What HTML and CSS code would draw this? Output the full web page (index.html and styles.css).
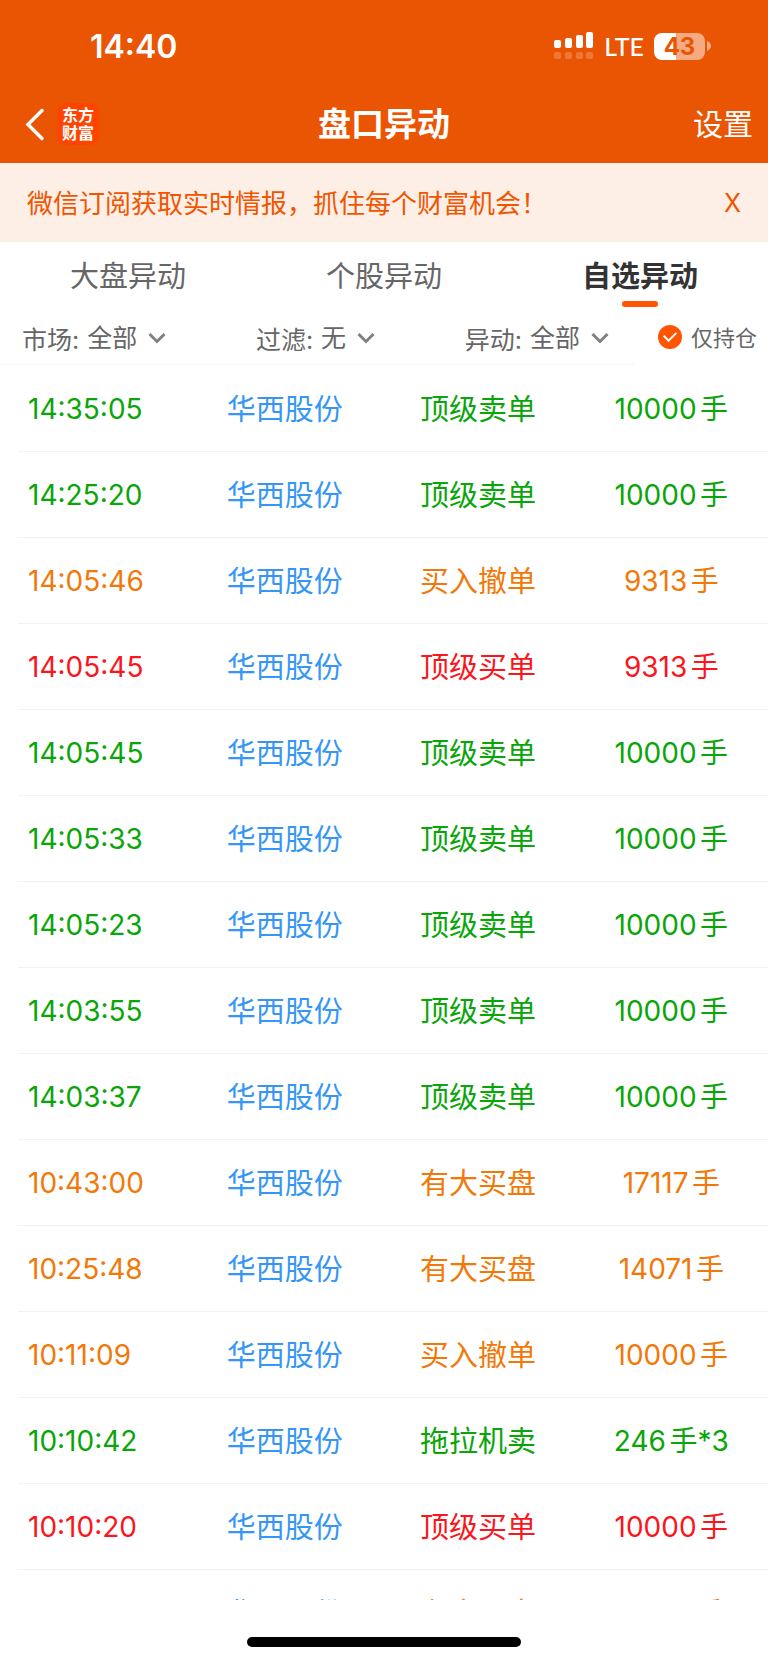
FILE: index.html
```html
<!DOCTYPE html>
<html lang="zh-CN">
<head>
    <meta charset="UTF-8">
    <meta name="viewport" content="width=device-width, initial-scale=1.0">
    <title>盘口异动</title>
    <link rel="stylesheet" href="styles.css">
</head>
<body>
    <header class="header">
        <div class="status-bar">
            <span class="clock">14:40</span>
            <div class="status-icons">
                <svg class="signal" width="40" height="28" viewBox="0 0 40 28" fill="#fff" aria-hidden="true">
                    <rect x="0" y="8" width="7" height="8" rx="2"/>
                    <rect x="11" y="6" width="7" height="10" rx="2"/>
                    <rect x="22" y="3" width="7" height="13" rx="2"/>
                    <rect x="32" y="0" width="7" height="16" rx="2"/>
                    <g opacity="0.2">
                        <rect x="0" y="20" width="7" height="7" rx="2"/>
                        <rect x="11" y="20" width="7" height="7" rx="2"/>
                        <rect x="22" y="20" width="7" height="7" rx="2"/>
                        <rect x="32" y="20" width="7" height="7" rx="2"/>
                    </g>
                </svg>
                <span class="network">LTE</span>
                <div class="battery">
                    <span class="battery-level">43</span>
                    <svg width="4" height="10" viewBox="0 0 4 10" aria-hidden="true"><path d="M0 0C2 1 4 2.500 4 5S2 9 0 10Z" fill="#fff" opacity="0.5"/></svg>
                </div>
            </div>
        </div>
        <nav class="nav-bar">
            <div class="nav-left">
                <a href="#" class="back" aria-label="返回">
                    <svg width="20" height="34" viewBox="0 0 20 34"><path d="M17 3.500L3 17.500L17 31.500" fill="none" stroke="#fff" stroke-width="3.500" stroke-linecap="round" stroke-linejoin="miter"/></svg>
                </a>
                <a href="#" class="logo">东方<br>财富</a>
            </div>
            <h1 class="title">盘口异动</h1>
            <a href="#" class="settings">设置</a>
        </nav>
    </header>

    <div class="notice">
        <a href="#" class="notice-text">微信订阅获取实时情报，抓住每个财富机会！</a>
        <button type="button" class="notice-close" aria-label="关闭">X</button>
    </div>

    <nav class="tabs">
        <a href="#" class="tab">大盘异动</a>
        <a href="#" class="tab">个股异动</a>
        <a href="#" class="tab active">自选异动</a>
    </nav>

    <form class="filters">
        <div class="filter-list">
            <div class="filter">
                <label for="market">市场:</label>
                <select id="market"><option>全部</option></select>
                <svg class="arrow" width="18" height="12" viewBox="0 0 18 12"><path d="M1.500 2L9 9.500L16.500 2" fill="none" stroke="#808080" stroke-width="3"/></svg>
            </div>
            <div class="filter">
                <label for="exclude">过滤:</label>
                <select id="exclude"><option>无</option></select>
                <svg class="arrow" width="18" height="12" viewBox="0 0 18 12"><path d="M1.500 2L9 9.500L16.500 2" fill="none" stroke="#808080" stroke-width="3"/></svg>
            </div>
            <div class="filter">
                <label for="change">异动:</label>
                <select id="change"><option>全部</option></select>
                <svg class="arrow" width="18" height="12" viewBox="0 0 18 12"><path d="M1.500 2L9 9.500L16.500 2" fill="none" stroke="#808080" stroke-width="3"/></svg>
            </div>
        </div>
        <div class="holding">
            <input type="checkbox" id="holding" checked>
            <label for="holding">仅持仓</label>
        </div>
    </form>

    <main class="list">
        <table class="records">
            <tbody>
                <tr class="sell"><td class="time">14:35:05</td><td class="stock">华西股份</td><td>顶级卖单</td><td class="amount">10000手</td></tr>
                <tr class="sell"><td class="time">14:25:20</td><td class="stock">华西股份</td><td>顶级卖单</td><td class="amount">10000手</td></tr>
                <tr class="notable"><td class="time">14:05:46</td><td class="stock">华西股份</td><td>买入撤单</td><td class="amount">9313手</td></tr>
                <tr class="buy"><td class="time">14:05:45</td><td class="stock">华西股份</td><td>顶级买单</td><td class="amount">9313手</td></tr>
                <tr class="sell"><td class="time">14:05:45</td><td class="stock">华西股份</td><td>顶级卖单</td><td class="amount">10000手</td></tr>
                <tr class="sell"><td class="time">14:05:33</td><td class="stock">华西股份</td><td>顶级卖单</td><td class="amount">10000手</td></tr>
                <tr class="sell"><td class="time">14:05:23</td><td class="stock">华西股份</td><td>顶级卖单</td><td class="amount">10000手</td></tr>
                <tr class="sell"><td class="time">14:03:55</td><td class="stock">华西股份</td><td>顶级卖单</td><td class="amount">10000手</td></tr>
                <tr class="sell"><td class="time">14:03:37</td><td class="stock">华西股份</td><td>顶级卖单</td><td class="amount">10000手</td></tr>
                <tr class="notable"><td class="time">10:43:00</td><td class="stock">华西股份</td><td>有大买盘</td><td class="amount">17117手</td></tr>
                <tr class="notable"><td class="time">10:25:48</td><td class="stock">华西股份</td><td>有大买盘</td><td class="amount">14071手</td></tr>
                <tr class="notable"><td class="time">10:11:09</td><td class="stock">华西股份</td><td>买入撤单</td><td class="amount">10000手</td></tr>
                <tr class="sell"><td class="time">10:10:42</td><td class="stock">华西股份</td><td>拖拉机卖</td><td class="amount">246手*3</td></tr>
                <tr class="buy"><td class="time">10:10:20</td><td class="stock">华西股份</td><td>顶级买单</td><td class="amount">10000手</td></tr>
                <tr class="notable"><td class="time">10:10:11</td><td class="stock">华西股份</td><td>有大买盘</td><td class="amount">14071手</td></tr>
            </tbody>
        </table>
    </main>

    <footer class="footer">
        <div class="home-bar"></div>
    </footer>
</body>
</html>
```
FILE: styles.css
```css
* {
    box-sizing: border-box;
}

body {
    display: flex;
    flex-direction: column;
    height: 100vh;
    margin: 0;
    background-color: #fff;
    color: #666;
    font-family: Inter, "Noto Sans CJK SC", sans-serif;
}

a {
    color: inherit;
    text-decoration: none;
}

.header {
    background-color: #ea5504;
    color: #fff;
}

/* status bar */
.status-bar {
    display: flex;
    justify-content: space-between;
    align-items: center;
    height: 86px;
    padding: 6px 57px 0 90px;
}

.clock {
    font-size: 32px;
    font-weight: 600;
}

.status-icons {
    display: flex;
    align-items: center;
    gap: 10px;
}

.network {
    font-family: Lato, sans-serif;
    font-size: 25px;
    font-weight: 500;
    line-height: 28px;
}

.battery {
    display: flex;
    align-items: center;
    gap: 2px;
}

.battery-level {
    width: 51px;
    height: 27px;
    border-radius: 8px;
    background: linear-gradient(to right, #fff 43%, #f5aa82 43%);
    color: #ea5504;
    font-size: 24px;
    font-weight: 700;
    line-height: 27px;
    text-align: center;
}

/* title bar */
.nav-bar {
    display: grid;
    grid-template-columns: 1fr auto 1fr;
    align-items: center;
    height: 77px;
    padding: 0 15px 2px;
}

.nav-left {
    display: flex;
    align-items: center;
    gap: 12px;
    padding-left: 10px;
}

.back,
.back svg,
.arrow {
    display: block;
}

.logo {
    width: 42px;
    height: 42px;
    padding-top: 3px;
    border-radius: 9px;
    background-color: #ff4400;
    font-size: 16px;
    font-weight: 700;
    line-height: 18px;
    text-align: center;
}

.title,
.settings {
    margin: 0;
    padding-bottom: 4px;
}

.title {
    font-size: 33px;
    font-weight: 700;
}

.settings {
    font-size: 30px;
    text-align: right;
}

/* notice */
.notice {
    display: flex;
    justify-content: space-between;
    align-items: center;
    height: 79px;
    padding: 0 27px 2px;
    background-color: #fdeee6;
    color: #f05500;
    font-size: 26px;
}

.notice-close {
    padding: 2px 0 0;
    border: 0;
    background: none;
    color: inherit;
    font-family: inherit;
    font-size: 25px;
}

/* tabs */
.tabs {
    display: flex;
    height: 70px;
}

.tab {
    position: relative;
    flex: 1;
    font-size: 29px;
    line-height: 70px;
    text-align: center;
}

.tab.active {
    color: #333;
    font-weight: 700;
}

.tab.active::after {
    content: "";
    position: absolute;
    bottom: 5px;
    left: 50%;
    width: 36px;
    height: 6px;
    margin-left: -18px;
    border-radius: 3px;
    background-color: #ff5500;
}

/* filters */
.filters {
    display: flex;
    height: 53px;
}

.filter-list {
    flex: 1;
    display: flex;
    justify-content: space-between;
    padding: 0 25px 0 22px;
    border-bottom: 1px solid #f5f5f5;
    font-size: 25px;
}

.filter {
    display: flex;
    align-items: center;
}

.filter select {
    appearance: none;
    margin: 0 10px 0 8px;
    padding: 0;
    border: 0;
    background: none;
    color: inherit;
    font: inherit;
}

.holding {
    display: flex;
    align-items: center;
    gap: 9px;
    padding: 0 11px 4px 24px;
    font-size: 22px;
}

.holding label {
    padding-bottom: 2px;
}

.holding input {
    appearance: none;
    display: grid;
    place-items: center;
    width: 24px;
    height: 24px;
    margin: 0;
    border-radius: 50%;
    background-color: #ff5500;
}

.holding input:checked::after {
    content: "";
    width: 10px;
    height: 6px;
    margin-bottom: 3px;
    border-bottom: 2px solid #fff;
    border-left: 2px solid #fff;
    transform: rotate(-45deg);
}

/* list */
.list {
    flex: 1;
    min-height: 0;
    padding-left: 18px;
    overflow: hidden;
}

.records {
    width: 100%;
    border-collapse: collapse;
    table-layout: fixed;
    font-size: 29px;
}

.records td {
    height: 86px;
    padding: 0 0 2px;
    border-bottom: 1px solid #f3f3f3;
    text-align: center;
    white-space: nowrap;
}

.records .time {
    width: 170px;
    padding: 2px 0 0 10px;
    font-size: 28px;
    text-align: left;
}

.records .amount {
    font-size: 28px;
    text-autospace: normal;
}

.sell {
    color: #09a509;
}

.buy {
    color: #f9161c;
}

.notable {
    color: #f27808;
}

.records .stock {
    color: #3596f5;
}

.footer {
    display: flex;
    justify-content: center;
    height: 62px;
    padding-top: 37px;
}

.home-bar {
    width: 274px;
    height: 10px;
    border-radius: 5px;
    background-color: #000;
}
```
